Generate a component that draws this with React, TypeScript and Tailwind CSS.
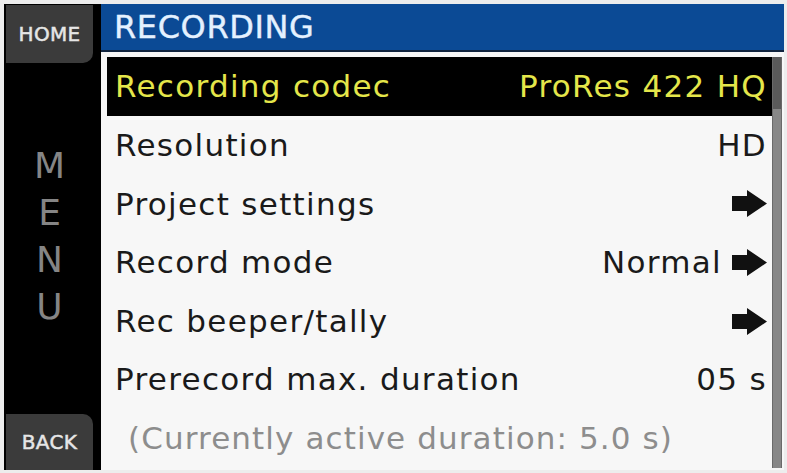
import React from "react";

const font = { fontFamily: '"DejaVu Sans", "Liberation Sans", sans-serif' };

function Arrow() {
  return (
    <svg width="35" height="27" viewBox="0 0 35 27" className="shrink-0">
      <polygon points="0,6 15,6 15,0 35,13.5 15,27 15,21 0,21" fill="#111" />
    </svg>
  );
}

type Row = { label: string; value?: string; arrow?: boolean };

const rows: Row[] = [
  { label: "Resolution", value: "HD" },
  { label: "Project settings", arrow: true },
  { label: "Record mode", value: "Normal", arrow: true },
  { label: "Rec beeper/tally", arrow: true },
  { label: "Prerecord max. duration", value: "05 s" },
];

export default function App() {
  return (
    <div
      className="w-[787px] h-[473px] bg-[#ededed] pl-[4px] pt-[4px] pr-[3px] pb-[3px] overflow-hidden"
      style={font}
    >
      <div className="flex h-full bg-black">
        {/* left rail: HOME, MENU, BACK */}
        <div className="w-[97px] shrink-0 flex flex-col justify-between pl-[2px]">
          <div className="w-[87px] h-[58px] mt-[1px] bg-[#3b3b3b] rounded-br-[10px] flex items-center justify-center text-[#e6e6e6] text-[20px] tracking-[0.3px] [-webkit-text-stroke:0.5px_#e6e6e6]">
            HOME
          </div>
          <div className="flex flex-col items-center text-[#858585] text-[36px] leading-[47px] mb-[6px] pr-[8px]">
            <span>M</span>
            <span>E</span>
            <span>N</span>
            <span>U</span>
          </div>
          <div className="w-[87px] h-[56px] bg-[#3b3b3b] rounded-tr-[10px] flex items-center justify-center text-[#e6e6e6] text-[20px] tracking-[0.3px] [-webkit-text-stroke:0.5px_#e6e6e6]">
            BACK
          </div>
        </div>

        {/* main panel */}
        <div className="flex-1 flex flex-col min-w-0">
          <div className="h-[48px] bg-[#0b4a95] flex items-center pl-[13px] text-[#e4f1ff] text-[32px] tracking-[0.6px] border-b-[2px] border-[#10243f] [-webkit-text-stroke:0.4px_#e4f1ff]">
            RECORDING
          </div>
          <div className="flex-1 flex bg-[#f7f7f7] pl-[6px] pt-[5px] pb-[2px] pr-[2px]">
            <div className="flex-1 flex flex-col min-w-0">
              <div className="h-[59px] bg-black flex items-center justify-between pl-[8px] pr-[5px] text-[#e4e64a] text-[31px] tracking-[1.3px]">
                <span>Recording codec</span>
                <span>ProRes 422 HQ</span>
              </div>
              {rows.map((r) => (
                <div
                  key={r.label}
                  className="h-[58.6px] flex items-center justify-between pl-[8px] pr-[5px] text-[#1a1a1a] text-[31px] tracking-[1.3px]"
                >
                  <span>{r.label}</span>
                  <span className="flex items-center gap-[10px]">
                    {r.value && <span>{r.value}</span>}
                    {r.arrow && <Arrow />}
                  </span>
                </div>
              ))}
              <div className="flex-1 flex items-center pl-[21px] text-[#8d8d8d] text-[31px] tracking-[1.1px]">
                (Currently active duration: 5.0 s)
              </div>
            </div>
            {/* scrollbar */}
            <div className="w-[10px] shrink-0 flex flex-col border-x border-[#6a6a6a]">
              <div className="h-[52px] bg-[#5a5a5a]" />
              <div className="flex-1 bg-[#878787]" />
            </div>
          </div>
        </div>
      </div>
    </div>
  );
}
